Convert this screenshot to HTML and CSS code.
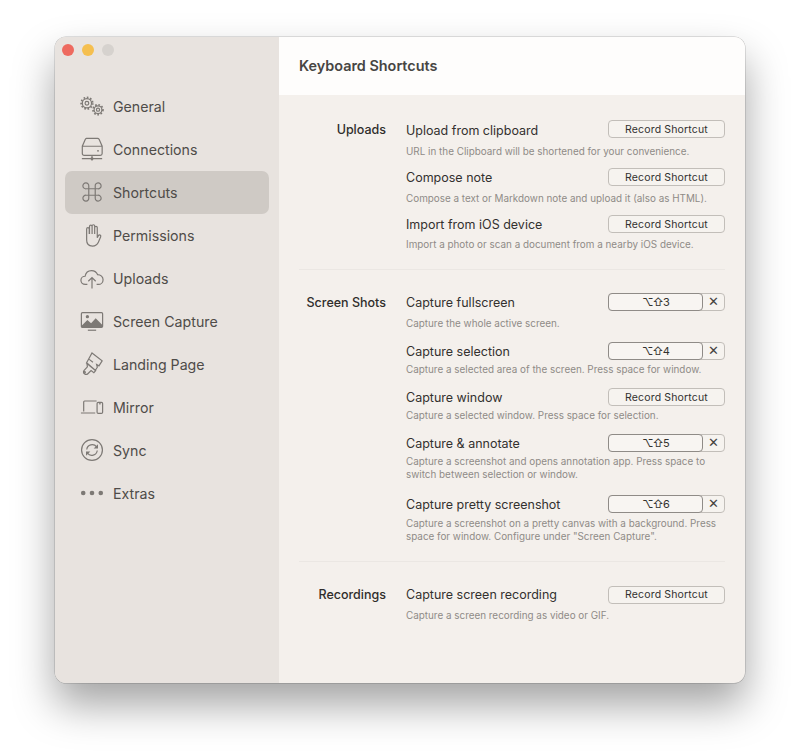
FILE: index.html
```html
<!DOCTYPE html>
<html lang="en">
<head>
<meta charset="utf-8">
<title>Keyboard Shortcuts</title>
<link rel="stylesheet" href="styles.css">
</head>
<body>
<div class="window">
  <aside class="sidebar">
    <div class="lights"><span class="light red"></span><span class="light yellow"></span><span class="light gray"></span></div>
    <nav class="nav">
      <a class="nav-item"><svg class="icon" viewBox="0 0 26 26"><circle class="teeth" cx="7.500" cy="10" r="6.300"/><circle cx="7.500" cy="10" r="5"/><circle cx="7.500" cy="10" r="2"/><circle class="teeth" cx="19.500" cy="17" r="5.400"/><circle cx="19.500" cy="17" r="4.200"/><circle cx="19.500" cy="17" r="1.700"/></svg><span>General</span></a>
      <a class="nav-item"><svg class="icon" viewBox="0 0 26 26"><path d="M7 1.500h12a2 2 0 0 1 1.700 1l3.300 7.500v8a2 2 0 0 1-2 2H4.500a2 2 0 0 1-2-2v-8l3.300-7.500a2 2 0 0 1 1.200-1zM2.500 10h21M13 20.500v5M2 23.500h22"/><circle class="fill" cx="19.500" cy="15" r="1"/><circle class="fill" cx="13" cy="23.500" r="1.600"/></svg><span>Connections</span></a>
      <a class="nav-item"><svg class="icon" viewBox="0 0 26 26"><path d="M9.500 9.500h7v7h-7zM9.500 9.500H6.800a3.200 3.200 0 1 1 2.700-2.800zM16.500 9.500V6.800a3.200 3.200 0 1 1 2.800 2.700zM9.500 16.500v2.700a3.200 3.200 0 1 1-2.800-2.700zM16.500 16.500h2.700a3.200 3.200 0 1 1-2.700 2.800z"/></svg><span>Shortcuts</span></a>
      <a class="nav-item"><svg class="icon" viewBox="0 0 26 26"><path d="M10.300 12V3.800a1.400 1.400 0 0 1 2.800 0V12M13.100 12V3.300a1.400 1.400 0 0 1 2.800 0V12M15.900 12V5a1.400 1.400 0 0 1 2.800 0v11l1.300-2.500a1.400 1.400 0 0 1 2.400 1.400l-2.500 6c-1.200 2.800-3.600 4.100-6.400 4.100-3.800 0-6.300-2.500-6.300-6.500V6.500a1.400 1.400 0 0 1 2.800 0V12"/></svg><span>Permissions</span></a>
      <a class="nav-item"><svg class="icon" viewBox="0 0 26 26"><path d="M8 20H5.800C3 20 1 18 1 15.500s2-4.400 4.500-4.400C6.200 7.300 9 5 12.500 5c3 0 5.400 1.700 6.500 4.300 3.500 0 6 2.500 6 5.500 0 3-2.300 5.200-5.200 5.200H18M13 24.500V12.500M9 16.500l4-4 4 4"/></svg><span>Uploads</span></a>
      <a class="nav-item"><svg class="icon" viewBox="0 0 26 26"><rect x="1.500" y="4" width="23" height="16" rx="1.200"/><path class="fill" d="M2 18l6-6 4 3.500 5-5.500 7 7v2.500H2z"/><circle class="fill" cx="8" cy="8.300" r="1.800"/><path d="M8.500 23h9"/></svg><span>Screen Capture</span></a>
      <a class="nav-item"><svg class="icon" viewBox="0 0 26 26"><path d="M13 1l11 8.500-3.500 5.500-2.500-1.500.8 3-2.300 3.500-9.500-8zM7.500 12l9.500 8-2 2.500-3-2.300-3.500 3.300a2.700 2.700 0 0 1-4-3.600l3.500-3.800zM10 8l4 3"/><circle cx="4.900" cy="22" r=".9"/></svg><span>Landing Page</span></a>
      <a class="nav-item"><svg class="icon" viewBox="0 0 26 26"><path d="M4 18V7.500a1 1 0 0 1 1-1h13M1 19.500h15.500"/><rect x="18.500" y="8" width="6" height="12" rx="1.300"/><path d="M20.500 9.500h2"/></svg><span>Mirror</span></a>
      <a class="nav-item"><svg class="icon" viewBox="0 0 26 26"><circle cx="13" cy="13" r="11.300"/><path d="M7.300 12.500a6 6 0 0 1 10.700-3M18.700 13.500a6 6 0 0 1-10.700 3"/><path class="fill" d="M19.500 6.800v4.700h-4.700zM6.500 19.200v-4.700h4.700z"/></svg><span>Sync</span></a>
      <a class="nav-item"><svg class="icon" viewBox="0 0 26 26"><circle class="fill" cx="3.500" cy="13" r="2.500"/><circle class="fill" cx="13" cy="13" r="2.500"/><circle class="fill" cx="22.500" cy="13" r="2.500"/></svg><span>Extras</span></a>
    </nav>
  </aside>
  <main class="main">
    <header class="header"><h1>Keyboard Shortcuts</h1></header>
    <div class="content">
      <section class="group uploads">
        <h2>Uploads</h2>
        <div class="rows">
          <div class="row"><div class="head"><span class="title">Upload from clipboard</span><button class="record">Record Shortcut</button></div><p class="desc">URL in the Clipboard will be shortened for your convenience.</p></div>
          <div class="row"><div class="head"><span class="title">Compose note</span><button class="record">Record Shortcut</button></div><p class="desc">Compose a text or Markdown note and upload it (also as HTML).</p></div>
          <div class="row"><div class="head"><span class="title">Import from iOS device</span><button class="record">Record Shortcut</button></div><p class="desc">Import a photo or scan a document from a nearby iOS device.</p></div>
        </div>
      </section>
      <section class="group shots">
        <h2>Screen Shots</h2>
        <div class="rows">
          <div class="row"><div class="head"><span class="title">Capture fullscreen</span><div class="combo"><span class="keys">⌥⇧3</span><span class="clear">✕</span></div></div><p class="desc">Capture the whole active screen.</p></div>
          <div class="row"><div class="head"><span class="title">Capture selection</span><div class="combo"><span class="keys">⌥⇧4</span><span class="clear">✕</span></div></div><p class="desc tight">Capture a selected area of the screen. Press space for window.</p></div>
          <div class="row"><div class="head"><span class="title">Capture window</span><button class="record">Record Shortcut</button></div><p class="desc tight">Capture a selected window. Press space for selection.</p></div>
          <div class="row"><div class="head"><span class="title">Capture &amp; annotate</span><div class="combo"><span class="keys">⌥⇧5</span><span class="clear">✕</span></div></div><p class="desc tight">Capture a screenshot and opens annotation app. Press space to switch between selection or window.</p></div>
          <div class="row"><div class="head"><span class="title">Capture pretty screenshot</span><div class="combo"><span class="keys">⌥⇧6</span><span class="clear">✕</span></div></div><p class="desc tight">Capture a screenshot on a pretty canvas with a background. Press space for window. Configure under "Screen Capture".</p></div>
        </div>
      </section>
      <section class="group recordings">
        <h2>Recordings</h2>
        <div class="rows">
          <div class="row"><div class="head"><span class="title">Capture screen recording</span><button class="record">Record Shortcut</button></div><p class="desc">Capture a screen recording as video or GIF.</p></div>
        </div>
      </section>
    </div>
  </main>
</div>
</body>
</html>
```

FILE: styles.css
```css
* { box-sizing: border-box; }
html, body { margin: 0; height: 100%; }
body {
  background: #fff;
  font-family: Inter, "Liberation Sans", "DejaVu Sans", sans-serif;
  color: #2f2d2b;
  overflow: hidden;
}
.window {
  display: flex;
  width: 690px;
  height: 646px;
  margin: 37px 0 0 55px;
  border-radius: 11px;
  overflow: hidden;
  background: #f4f0ec;
  box-shadow: 0 0 0 .5px rgba(0,0,0,.22), 0 22px 42px rgba(0,0,0,.36);
}
.sidebar {
  flex: 0 0 224px;
  background: #e8e3df;
  padding: 7px 10px 0;
}
.lights { display: flex; gap: 8px; height: 12px; margin: 0 0 28.500px -3px; }
.light { width: 12px; height: 12px; border-radius: 50%; }
.red { background: #ee6a5f; }
.yellow { background: #f5bf4f; }
.gray { background: #d6d2ce; }
.nav { display: flex; flex-direction: column; }
.nav-item {
  display: flex;
  align-items: center;
  gap: 9px;
  height: 43px;
  padding-left: 15px;
  border-radius: 7px;
  font-size: 14.200px;
  color: #4f4c49;
}
.nav-item:nth-child(3) { background: #cfcac5; }
.icon {
  flex: none;
  width: 24px;
  height: 24px;
  fill: none;
  stroke: #7d7975;
  stroke-width: 1.300;
}
.icon .fill { fill: #7d7975; stroke: none; }
.icon .teeth { stroke-width: 1.800; stroke-dasharray: 1.800 1.800; }
.main { flex: 1; display: flex; flex-direction: column; min-width: 0; }
.header {
  flex: 0 0 58px;
  display: flex;
  align-items: center;
  padding-left: 20px;
  background: #fefdfc;
}
.header h1 { margin: -1px 0 0; font-size: 14.400px; font-weight: 600; color: #474543; }
.content { padding: 0 20px; flex: 1; }
.group {
  display: grid;
  grid-template-columns: 87px 1fr;
  column-gap: 20px;
  border-bottom: 1px solid #ebe7e3;
}
.uploads { padding: 25px 0 18px; }
.shots { padding: 23px 0 18px; }
.recordings { padding: 23.500px 0 0; border-bottom: 0; }
.group h2 {
  margin: 0;
  height: 18px;
  line-height: 18px;
  text-align: right;
  font-size: 12.500px;
  font-weight: 500;
  color: #2f2d2b;
}
.uploads h2, .shots h2 { margin-top: 1px; }
.rows { display: flex; flex-direction: column; gap: 10px; }
.shots .rows { gap: 12px; }
.uploads .row:first-child .title { margin-top: 2px; }
.shots .row:nth-child(4) { margin-bottom: 2px; }
.head { display: flex; align-items: center; justify-content: space-between; height: 18px; }
.title { font-size: 12.500px; color: #33312f; }
.desc {
  margin: 6px 0 0;
  font-size: 9.900px;
  line-height: 13px;
  color: #8f8b87;
}
.uploads .row:first-child .desc { margin-top: 7px; }
.uploads .row:last-child .desc, .recordings .desc { margin-top: 5px; }
.desc.tight { margin-top: 3px; }
.shots .row:last-child .desc { margin-top: 4px; }
.record, .combo {
  width: 117px;
  height: 18px;
  border: 1px solid #c2beb9;
  border-radius: 4px;
  background: #f6f3ef;
  font: inherit;
  font-size: 10.500px;
  letter-spacing: .16px;
  color: #33312f;
  padding: 0;
}
.combo { display: flex; overflow: visible; }
.keys {
  flex: 0 0 95px;
  margin: -1px 0 -1px -1px;
  border: 1px solid #8f8b87;
  border-radius: 4px;
  background: #f8f5f2;
  text-align: center;
  line-height: 16px;
  font-size: 11px;
  letter-spacing: -.9px;
  font-family: Inter, "DejaVu Sans", sans-serif;
}
.clear { flex: 1; text-align: center; line-height: 16px; font-size: 13px; letter-spacing: 0; color: #45433f; font-family: "DejaVu Sans", sans-serif; }
```
